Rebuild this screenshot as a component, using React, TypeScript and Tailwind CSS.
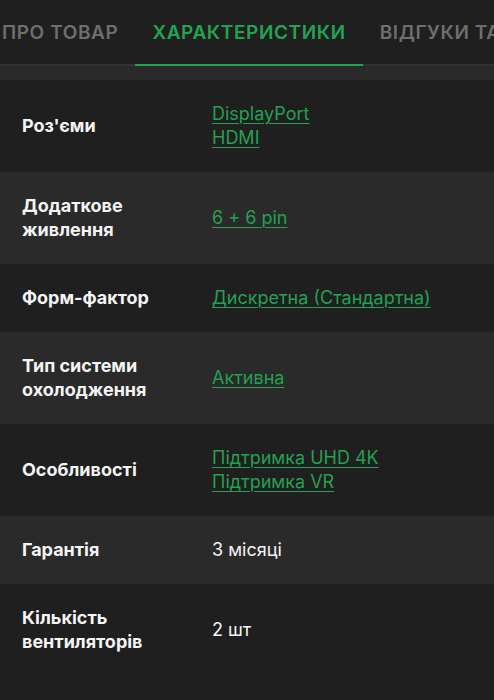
const specs: { label: string; values: string[]; link: boolean; tone: "dark" | "light" }[] = [
	{ label: "Роз'єми", values: ["DisplayPort", "HDMI"], link: true, tone: "dark" },
	{ label: "Додаткове живлення", values: ["6 + 6 pin"], link: true, tone: "light" },
	{ label: "Форм-фактор", values: ["Дискретна (Стандартна)"], link: true, tone: "dark" },
	{ label: "Тип системи охолодження", values: ["Активна"], link: true, tone: "light" },
	{ label: "Особливості", values: ["Підтримка UHD 4K", "Підтримка VR"], link: true, tone: "dark" },
	{ label: "Гарантія", values: ["3 місяці"], link: false, tone: "light" },
	{ label: "Кількість вентиляторів", values: ["2 шт"], link: false, tone: "dark" },
];

const tabs = [
	{ title: "ПРО ТОВАР", active: false },
	{ title: "ХАРАКТЕРИСТИКИ", active: true },
	{ title: "ВІДГУКИ ТА ПИТАННЯ", active: false },
];

function Tabs() {
	// the strip is scrolled a little to the right, so the first tab starts off-screen
	return (
		<nav className="overflow-hidden bg-[#1f1f1f]">
			<ul className="-ml-[15px] flex h-[66px] whitespace-nowrap">
				{tabs.map((tab) => (
					<li
						key={tab.title}
						className={
							tab.active
								? "flex items-center border-b-[2px] border-[#22a352] px-[17px] pt-[2px] text-[19px] font-semibold tracking-[0.6px] text-[#22a352]"
								: "flex items-center border-b-[2px] border-[#333333] px-[17px] pt-[2px] text-[19px] font-semibold tracking-[0.6px] text-[#6e6e6e]"
						}
					>
						{tab.title}
					</li>
				))}
				<li className="flex-1 border-b-[2px] border-[#333333]" />
			</ul>
		</nav>
	);
}

function SpecRow(props: (typeof specs)[number]) {
	const { label, values, link, tone } = props;

	return (
		<div
			className={`flex items-center py-[22px] pl-[22px] ${tone === "dark" ? "bg-[#1f1f1f]" : "bg-[#2a2a2a]"}`}
		>
			<dt className="w-[190px] shrink-0 pr-4 text-[18px] leading-[24px] font-bold text-[#f4f4f4]">{label}</dt>
			<dd className="flex flex-col text-[18px] leading-[24px]">
				{values.map((value) =>
					link ? (
						<a
							key={value}
							href="#"
							className="w-fit text-[#25a052] underline decoration-1 underline-offset-[3px]"
						>
							{value}
						</a>
					) : (
						<span key={value} className="text-[#f4f4f4]">
							{value}
						</span>
					)
				)}
			</dd>
		</div>
	);
}

export default function App() {
	return (
		<div className="min-h-[700px] w-[494px] bg-[#1f1f1f] font-['Inter',sans-serif]">
			<Tabs />
			<div className="h-[14px] bg-[#2a2a2a]" />
			<dl>
				{specs.map((spec) => (
					<SpecRow key={spec.label} {...spec} />
				))}
			</dl>
		</div>
	);
}
